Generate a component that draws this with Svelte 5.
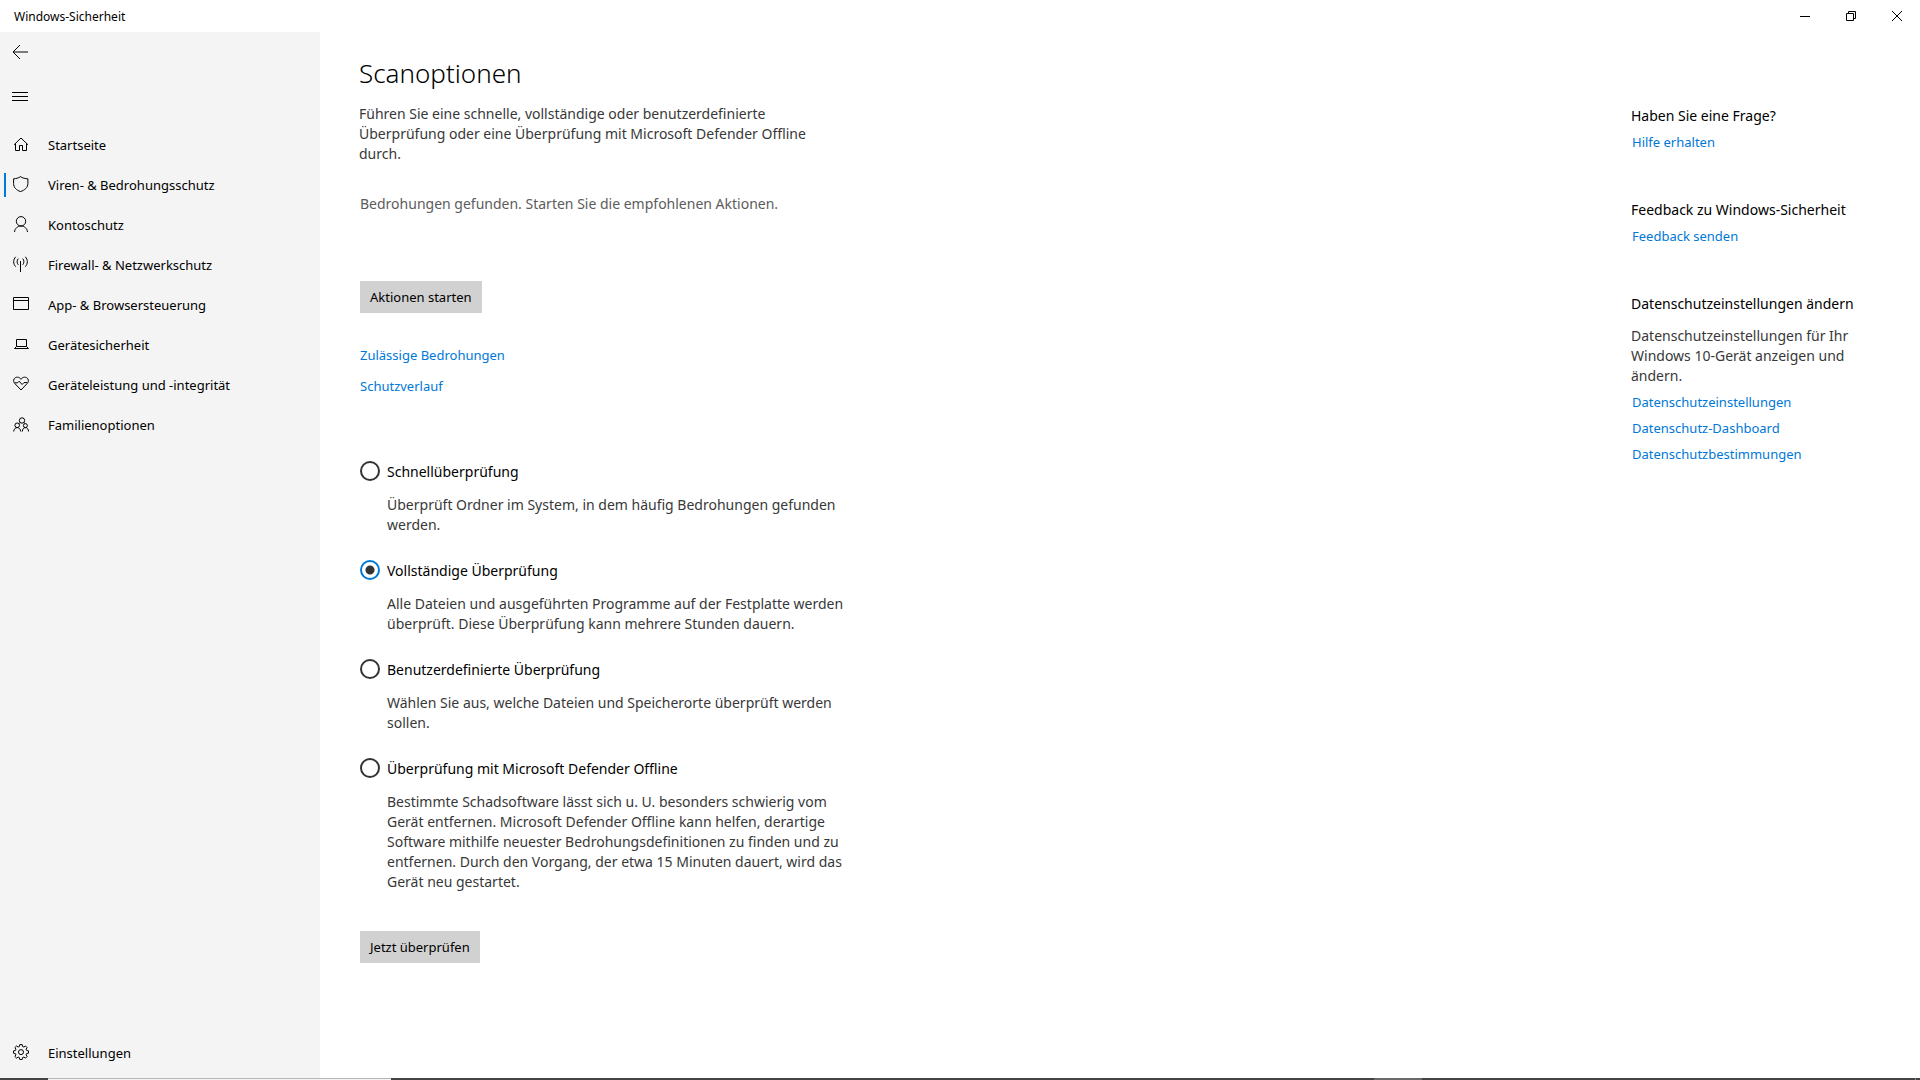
<!--
  Scan options page of the Windows security app.
  Title bar and navigation on the left, the scan form in the middle,
  help links on the right.
-->
<script lang="ts">
  type IconName = 'home' | 'shield' | 'person' | 'antenna' | 'window' | 'laptop' | 'heart' | 'family' | 'gear';
  type NavItem = { label: string; icon: IconName; active?: boolean };
  type ScanOption = { id: string; label: string; description: string };
  type HelpGroup = { title: string; text?: string; links: string[] };

  const navItems: NavItem[] = [
    { label: 'Startseite', icon: 'home' },
    { label: 'Viren- & Bedrohungsschutz', icon: 'shield', active: true },
    { label: 'Kontoschutz', icon: 'person' },
    { label: 'Firewall- & Netzwerkschutz', icon: 'antenna' },
    { label: 'App- & Browsersteuerung', icon: 'window' },
    { label: 'Gerätesicherheit', icon: 'laptop' },
    { label: 'Geräteleistung und -integrität', icon: 'heart' },
    { label: 'Familienoptionen', icon: 'family' }
  ];

  const scanOptions: ScanOption[] = [
    {
      id: 'quick',
      label: 'Schnellüberprüfung',
      description: 'Überprüft Ordner im System, in dem häufig Bedrohungen gefunden werden.'
    },
    {
      id: 'full',
      label: 'Vollständige Überprüfung',
      description:
        'Alle Dateien und ausgeführten Programme auf der Festplatte werden überprüft. Diese Überprüfung kann mehrere Stunden dauern.'
    },
    {
      id: 'custom',
      label: 'Benutzerdefinierte Überprüfung',
      description: 'Wählen Sie aus, welche Dateien und Speicherorte überprüft werden sollen.'
    },
    {
      id: 'offline',
      label: 'Überprüfung mit Microsoft Defender Offline',
      description:
        'Bestimmte Schadsoftware lässt sich u. U. besonders schwierig vom Gerät entfernen. Microsoft Defender Offline kann helfen, derartige Software mithilfe neuester Bedrohungsdefinitionen zu finden und zu entfernen. Durch den Vorgang, der etwa 15 Minuten dauert, wird das Gerät neu gestartet.'
    }
  ];

  const helpGroups: HelpGroup[] = [
    { title: 'Haben Sie eine Frage?', links: ['Hilfe erhalten'] },
    { title: 'Feedback zu Windows-Sicherheit', links: ['Feedback senden'] },
    {
      title: 'Datenschutzeinstellungen ändern',
      text: 'Datenschutzeinstellungen für Ihr Windows 10-Gerät anzeigen und ändern.',
      links: ['Datenschutzeinstellungen', 'Datenschutz-Dashboard', 'Datenschutzbestimmungen']
    }
  ];

  const iconPaths: Record<IconName, string> = {
    home: 'M1 8.8 8 2l7 6.8M2.5 7.6v6.9h4V9.5h3v5h4V7.6',
    shield: 'M7.5.6C9.6 2.2 12 2.6 14.9 2.8v4.7c0 3.8-3 6.6-7.4 8.1C3.1 14.1.6 11.3.6 7.5V2.8C3 2.6 5.4 2.2 7.5.6z',
    person: 'M8 .6a4.7 4.7 0 1 1 0 9.4a4.7 4.7 0 1 1 0-9.4M1.5 16c.3-3.5 3-6 6.5-6s6.2 2.5 6.5 6',
    antenna:
      'M7.5 5V16M5.3 2.6c-1.6 1.8-1.6 4.4 0 6.2M9.7 2.6c1.6 1.8 1.6 4.4 0 6.2M2.7.8c-2.7 2.9-2.7 7 0 9.9M12.3.8c2.7 2.9 2.7 7 0 9.9',
    window: 'M.5 1.5h15v12H.5zM.5 4.5h15',
    laptop: 'M3.5 3.5h10v7h-10zM3.5 10.5l-2 2h14l-2-2',
    heart:
      'M8 3.3C6.5.6 2.6.5 1.2 2.8.1 4.6.7 6.4 1.9 7.6L8 14 14.1 7.6c1.2-1.2 1.8-3 .7-4.8C13.4.5 9.5.6 8 3.3zM1.6 6.8h3l1.6-1.6 2.9 3.3 1.9-1.9h3.4',
    family:
      'M9 1.8a2.7 2.7 0 1 1 0 5.4a2.7 2.7 0 1 1 0-5.4M4.2 7a2.3 2.3 0 1 1 0 4.6a2.3 2.3 0 1 1 0-4.6M12.4 7.6a2 2 0 1 1 0 4a2 2 0 1 1 0-4M.7 15.5c.2-2.3 1.5-3.9 3.5-3.9s3.4 1.6 3.6 3.9M9.3 15.5c.2-2.3 1.3-3.9 3.1-3.9s3 1.6 3.2 3.9M6.2 7.6 7 6.4M11 6.4l1 1.2',
    gear: 'M6.8.6h2.4l.4 1.9 1.3.5 1.6-1 1.6 1.6-1 1.6.5 1.3 1.9.4v2.3l-1.9.4-.5 1.3 1 1.6-1.6 1.6-1.6-1-1.3.5-.4 1.9H6.8l-.4-1.9-1.3-.5-1.6 1-1.6-1.6 1-1.6-.5-1.3-1.9-.4V6.9l1.9-.4.5-1.3-1-1.6L3.5 2l1.6 1 1.3-.5zM8 5.6a2.5 2.5 0 1 1 0 5a2.5 2.5 0 1 1 0-5'
  };

  let selectedScan = $state('full');
</script>

{#snippet navIcon(name: IconName)}
  <svg class="nav-icon" viewBox="0 0 16 16" aria-hidden="true">
    <path d={iconPaths[name]} />
  </svg>
{/snippet}

<div class="window">
  <header class="titlebar">
    <span class="titlebar-text">Windows-Sicherheit</span>
    <button type="button" class="caption-button" aria-label="Minimieren">
      <svg viewBox="0 0 10 10" aria-hidden="true"><path d="M0 5.5h10" /></svg>
    </button>
    <button type="button" class="caption-button" aria-label="Verkleinern">
      <svg viewBox="0 0 10 10" aria-hidden="true"><path d="M.5 2.5h7v7h-7zM2.5 2.5v-2h7v7h-2" /></svg>
    </button>
    <button type="button" class="caption-button" aria-label="Schließen">
      <svg viewBox="0 0 10 10" aria-hidden="true"><path d="M0 0l10 10M10 0 0 10" /></svg>
    </button>
  </header>

  <div class="body">
    <nav class="sidebar" aria-label="Navigation">
      <button type="button" class="tool-button" aria-label="Zurück">
        <svg viewBox="0 0 16 16" aria-hidden="true"><path d="M8 1 1 8l7 7M1 8h15" /></svg>
      </button>
      <button type="button" class="tool-button" aria-label="Menü">
        <svg viewBox="0 0 16 16" aria-hidden="true"><path d="M0 4.5h16M0 8.5h16M0 12.5h16" /></svg>
      </button>
      <ul class="nav-list">
        {#each navItems as item (item.label)}
          <li>
            <a href="#top" class="nav-link" class:active={item.active} aria-current={item.active ? 'page' : undefined}>
              {@render navIcon(item.icon)}
              <span>{item.label}</span>
            </a>
          </li>
        {/each}
      </ul>
      <a href="#top" class="nav-link">
        {@render navIcon('gear')}
        <span>Einstellungen</span>
      </a>
    </nav>

    <main class="content">
      <h1>Scanoptionen</h1>
      <p class="intro">
        Führen Sie eine schnelle, vollständige oder benutzerdefinierte Überprüfung oder eine Überprüfung mit Microsoft
        Defender Offline durch.
      </p>
      <div class="scan">
        <p class="status">Bedrohungen gefunden. Starten Sie die empfohlenen Aktionen.</p>
        <button type="button" class="action-button">Aktionen starten</button>
        <div class="scan-links">
          <a href="#top">Zulässige Bedrohungen</a>
          <a href="#top">Schutzverlauf</a>
        </div>

        <div class="options" role="radiogroup" aria-label="Scanoptionen">
          {#each scanOptions as option (option.id)}
            <div class="option">
              <input
                type="radio"
                name="scan"
                id={option.id}
                value={option.id}
                bind:group={selectedScan}
                aria-describedby={`${option.id}-text`}
              />
              <label for={option.id}>{option.label}</label>
              <p id={`${option.id}-text`}>{option.description}</p>
            </div>
          {/each}
        </div>

        <button type="button" class="action-button">Jetzt überprüfen</button>
      </div>
    </main>

    <aside class="help">
      {#each helpGroups as group (group.title)}
        <section>
          <h2>{group.title}</h2>
          {#if group.text}
            <p>{group.text}</p>
          {/if}
          {#each group.links as link (link)}
            <a href="#top">{link}</a>
          {/each}
        </section>
      {/each}
    </aside>
  </div>

  <!-- upper edge of the auto-hidden taskbar -->
  <div class="taskbar-edge" aria-hidden="true">
    <span class="taskbar-search"></span>
    <span class="taskbar-app"></span>
    <span class="taskbar-desktop"></span>
  </div>
</div>

<style>
  :global(body) {
    margin: 0;
    background: #fff;
  }
  .window {
    display: flex;
    flex-direction: column;
    min-height: 100vh;
    font-family: 'Noto Sans', 'Open Sans', sans-serif;
    font-size: 14px;
    line-height: 20px;
    color: #000;
    background: #fff;
  }
  h1,
  h2,
  p,
  ul {
    margin: 0;
    padding: 0;
    font-weight: 400;
  }
  svg {
    fill: none;
    stroke: currentColor;
    stroke-width: 1;
  }
  button {
    border: 0;
    padding: 0;
    font: inherit;
    color: inherit;
    background: none;
  }
  a {
    color: #0078d7;
    text-decoration: none;
  }

  .titlebar {
    display: flex;
    align-items: center;
    height: 32px;
  }
  .titlebar-text {
    flex: 1;
    padding: 2px 0 0 14px;
    font-size: 12px;
  }
  .caption-button {
    display: flex;
    align-items: center;
    justify-content: center;
    width: 46px;
    height: 32px;
  }
  .caption-button svg {
    width: 10px;
    height: 10px;
  }

  .body {
    display: flex;
    flex: 1;
  }

  .sidebar {
    display: flex;
    flex-direction: column;
    flex: 0 0 320px;
    padding-bottom: 5px;
    background: #f4f4f4;
  }
  .tool-button {
    display: flex;
    align-items: center;
    width: 48px;
    height: 40px;
    padding-left: 12px;
    margin-bottom: 4px;
  }
  .tool-button svg {
    width: 16px;
    height: 16px;
  }
  .nav-list {
    flex: 1;
    margin-top: 5px;
    list-style: none;
  }
  .nav-link {
    display: flex;
    align-items: center;
    gap: 19px;
    height: 40px;
    padding-left: 13px;
    font-size: 13px;
    color: #000;
  }
  .nav-link.active {
    padding-left: 4px;
  }
  .nav-link.active::before {
    content: '';
    width: 2px;
    height: 24px;
    margin-right: -12px;
    background: #0078d7;
  }
  .nav-icon {
    flex: none;
    width: 16px;
    height: 16px;
    margin-bottom: 2px;
  }

  .content {
    flex: 1;
    padding: 21px 0 0 39px;
  }
  h1 {
    font-size: 26px;
    font-weight: 300;
    line-height: 40px;
  }
  .intro {
    max-width: 460px;
    margin-top: 11px;
    color: #383838;
  }
  .scan {
    padding-left: 1px;
  }
  .status {
    margin-top: 30px;
    color: #5c5c5c;
  }
  .action-button {
    display: block;
    height: 32px;
    padding: 0 10px;
    font-size: 13px;
    background: #d1d1d1;
  }
  .status + .action-button {
    margin-top: 67px;
  }
  .scan-links {
    display: flex;
    flex-direction: column;
    align-items: flex-start;
    gap: 11px;
    margin-top: 32px;
    font-size: 13px;
  }

  .options {
    display: grid;
    gap: 25px;
    max-width: 500px;
    margin: 65px 0 39px;
  }
  .option {
    display: grid;
    grid-template-columns: 20px 1fr;
    gap: 13px 7px;
    align-items: start;
  }
  .option label {
    padding-top: 1px;
  }
  .option p {
    grid-column: 2;
    max-width: 464px;
    color: #383838;
  }
  .option input {
    appearance: none;
    width: 20px;
    height: 20px;
    margin: 0;
    border: 2px solid #333;
    border-radius: 50%;
    background: #fff;
  }
  .option input:checked {
    border-color: #0078d7;
    background: radial-gradient(circle, #333 4px, #fff 5px);
  }

  .help {
    flex: 0 0 289px;
    padding-top: 74px;
  }
  .help section {
    display: flex;
    flex-direction: column;
    align-items: flex-start;
    gap: 6px;
    margin-bottom: 48px;
  }
  .help h2 {
    font-size: 14px;
  }
  .help p {
    max-width: 230px;
    margin-top: 6px;
    color: #383838;
  }
  .help a {
    padding-left: 1px;
    font-size: 13px;
  }

  .taskbar-edge {
    display: flex;
    height: 2px;
    background: #444;
  }
  .taskbar-search {
    width: 343px;
    margin-left: 48px;
    border-top: 1px solid #b8b8b8;
    background: #f3f3f3;
  }
  .taskbar-app {
    width: 48px;
    margin-left: auto;
    background: #6a6a6a;
  }
  .taskbar-desktop {
    width: 1px;
    margin: 0 4px 0 493px;
    background: #888;
  }
</style>
